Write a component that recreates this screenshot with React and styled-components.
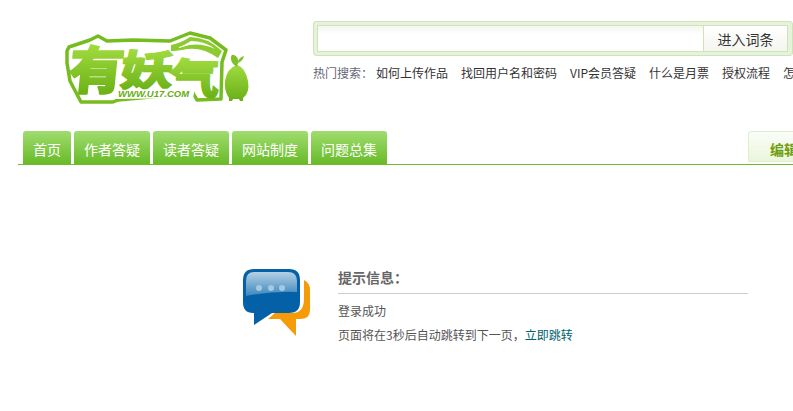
import React from 'react';
import styled, { createGlobalStyle } from 'styled-components';

const navItems = ['首页', '作者答疑', '读者答疑', '网站制度', '问题总集'];
const hotItems = ['如何上传作品', '找回用户名和密码', 'VIP会员答疑', '什么是月票', '授权流程', '怎样成为签约作者'];

function Logo() {
  return (
    <svg width="200" height="74" viewBox="0 0 200 74">
      <defs>
        <linearGradient id="logoGreen" x1="0" y1="0" x2="0" y2="1">
          <stop offset="0" stopColor="#a0da40" />
          <stop offset="1" stopColor="#68b016" />
        </linearGradient>
        <linearGradient id="letterGreen" gradientUnits="userSpaceOnUse" x1="0" y1="-40" x2="0" y2="8">
          <stop offset="0" stopColor="#a2dc3e" />
          <stop offset="1" stopColor="#66ae14" />
        </linearGradient>
      </defs>
      {/* badge outline behind the letters */}
      <path
        d="M4 16 L25 9 L33 5 L42 10 L68 9 L105 10 L125 2 L145 7 L161 19 L157 31 L156 68 L132 69 L128 62 L53 69 L48 71 L16 71 L5 50 L2 32 L2 20 Z"
        fill="#fff"
        stroke="#76bc1e"
        strokeWidth="3.5"
        strokeLinejoin="round"
      />
      {/* swoosh over the last letter */}
      <path d="M106 14 Q116 12 125 6 Q142 6 157 20 L153 27 Q138 16 122 18 Q112 20 106 20 Z" fill="#8ccb30" />
      <path d="M114 16 Q120 14 126 10 Q140 10 150 18 Q138 12 124 14 Q118 16 114 17 Z" fill="#fff" />
      <LogoLetters>
        <text transform="translate(2 58) skewX(-6) scale(1.2 1.12)" fontSize="46">有</text>
        <text transform="translate(54 55) skewX(-6) scale(1.15 0.92)" fontSize="46">妖</text>
        <text transform="translate(103 63) skewX(-4) scale(1.1 0.92)" fontSize="46">气</text>
      </LogoLetters>
      {/* url strip */}
      <path d="M52 59 L130 57 L128 67 L50 68 Z" fill="#fff" />
      <UrlText x="53" y="66">WWW.U17.COM</UrlText>
      {/* pear mascot */}
      <path
        d="M172 34 Q180 36 183 50 Q185 62 178 67 L178 70 L175 70 L174 68 L168 68 L167 70 L164 70 L164 67 Q159 60 160 50 Q162 37 172 34 Z"
        fill="url(#logoGreen)"
      />
      <path d="M166 27 Q166 23 169 24 Q174 26 173 32 L172 36 Q166 33 166 27 Z" fill="#7cc02a" />
      <path d="M173 30 Q175 26 179 25 Q178 30 173 32 Z" fill="#7cc02a" />
    </svg>
  );
}

function BubbleIcon() {
  return (
    <svg width="68" height="70" viewBox="0 0 68 70">
      <defs>
        <linearGradient id="bubbleGloss" x1="0" y1="0" x2="0" y2="1">
          <stop offset="0" stopColor="#b4d0e4" />
          <stop offset="1" stopColor="#3b88bf" />
        </linearGradient>
      </defs>
      <path
        d="M62 12 Q68 15 68 22 V42 Q68 51 58 51 H54 V68 L38 51 H26 L33 45 H50 Q62 45 62 31 Z"
        fill="#f59b07"
      />
      <path
        d="M12 1 H47 Q58 1 58 12 V34 Q58 45 47 45 H30 L12 57 V45 H11 Q1 45 1 34 V12 Q1 1 12 1 Z"
        fill="#0461a8"
      />
      <path d="M12 4 H46 Q55 4 55 13 V24 Q30 23 4 28 V13 Q4 4 12 4 Z" fill="url(#bubbleGloss)" />
      <circle cx="17" cy="20" r="3" fill="#a6c8e0" />
      <circle cx="29" cy="20" r="3" fill="#a6c8e0" />
      <circle cx="40" cy="20" r="3" fill="#a6c8e0" />
    </svg>
  );
}

export default function App() {
  return (
    <>
      <GlobalStyle />
      <Page>
        <Header>
          <LogoSlot>
            <Logo />
          </LogoSlot>
          <SearchColumn>
            <SearchBox>
              <SearchInput />
              <SearchButton>进入词条</SearchButton>
            </SearchBox>
            <HotRow>
              <HotLabel>热门搜索：</HotLabel>
              {hotItems.map((item) => (
                <HotLink key={item}>{item}</HotLink>
              ))}
            </HotRow>
          </SearchColumn>
        </Header>
        <Nav>
          <Tabs>
            {navItems.map((item) => (
              <Tab key={item}>{item}</Tab>
            ))}
          </Tabs>
          <EditTab>编辑帮助</EditTab>
        </Nav>
        <Message>
          <IconSlot>
            <BubbleIcon />
          </IconSlot>
          <MessageBody>
            <MessageTitle>提示信息：</MessageTitle>
            <MessageLine>登录成功</MessageLine>
            <MessageLine>
              页面将在3秒后自动跳转到下一页，<JumpLink>立即跳转</JumpLink>
            </MessageLine>
          </MessageBody>
        </Message>
      </Page>
    </>
  );
}

// styling
const GlobalStyle = createGlobalStyle`
  html, body {
    margin: 0;
    height: 100%;
    overflow: hidden;
    background: #fff;
  }
  body {
    font-family: "Noto Sans CJK SC", "Liberation Sans", sans-serif;
    font-size: 12px;
    color: #666;
  }
`;

const Page = styled.div`
  width: 1000px;
  margin-left: 18px;
`;

const Header = styled.div`
  display: flex;
  height: 131px;
`;

const LogoSlot = styled.div`
  width: 295px;
  padding: 31px 0 0 47px;
  box-sizing: border-box;
`;

const LogoLetters = styled.g`
  font-family: "Noto Sans CJK SC", sans-serif;
  font-weight: 900;
  fill: url(#letterGreen);
  stroke: url(#letterGreen);
  stroke-width: 1.4px;
  stroke-linejoin: round;
`;

const UrlText = styled.text`
  font-family: "Liberation Sans", sans-serif;
  font-weight: 700;
  font-style: italic;
  font-size: 9.5px;
  fill: #66ad14;
`;

const SearchColumn = styled.div`
  width: 480px;
  padding-top: 21px;
  box-sizing: border-box;
`;

const SearchBox = styled.div`
  display: flex;
  height: 35px;
  box-sizing: border-box;
  padding: 3px;
  background: #e6f2d9;
  border: 1px solid #d0e4bc;
  border-radius: 3px;
`;

const SearchInput = styled.div`
  width: 385px;
  height: 25px;
  background: linear-gradient(#f4f6f0, #fff 35%);
  border: 1px solid #cfe3ba;
  border-right: 0;
`;

const SearchButton = styled.div`
  flex: 1;
  height: 25px;
  line-height: 26px;
  text-align: center;
  font-size: 14px;
  color: #333;
  background: linear-gradient(#fff, #f4f6f0);
  border: 1px solid #cfe3ba;
  margin-right: 1px;
`;

const HotRow = styled.div`
  display: flex;
  white-space: nowrap;
  gap: 13px;
  margin-top: 8px;
  line-height: 18px;
  color: #333;
`;

const HotLabel = styled.span`
  color: #667;
  margin-right: -10px;
`;

const HotLink = styled.span`
  color: #333;
`;

const Nav = styled.div`
  display: flex;
  justify-content: space-between;
  height: 33px;
  border-bottom: 1px solid #70bb2b;
  padding-left: 5px;
`;

const Tabs = styled.div`
  display: flex;
  gap: 3px;
`;

const Tab = styled.div`
  height: 33px;
  padding: 0 10px;
  line-height: 37px;
  font-size: 14px;
  color: #fff;
  border-radius: 3px 3px 0 0;
  background: linear-gradient(#a0dc70, #68bb28);
`;

const EditTab = styled.div`
  position: absolute;
  left: 748px;
  width: 100px;
  height: 29px;
  padding-left: 21px;
  line-height: 34px;
  font-size: 14px;
  font-weight: 700;
  color: #6f9e0c;
  border: 1px solid #dcefc8;
  border-radius: 3px 3px 0 0;
  background: linear-gradient(#fbfdf8, #eaf6dc);
`;

const Message = styled.div`
  display: flex;
  margin-top: 103px;
  padding-left: 224px;
`;

const IconSlot = styled.div`
  width: 96px;
`;

const MessageBody = styled.div`
  width: 410px;
`;

const MessageTitle = styled.div`
  height: 25px;
  line-height: 18px;
  font-size: 14px;
  font-weight: 700;
  color: #666;
  border-bottom: 1px solid #c9cfc9;
  margin-bottom: 5px;
`;

const MessageLine = styled.div`
  line-height: 24px;
  font-size: 12px;
  color: #555;
`;

const JumpLink = styled.span`
  color: #005f70;
`;
